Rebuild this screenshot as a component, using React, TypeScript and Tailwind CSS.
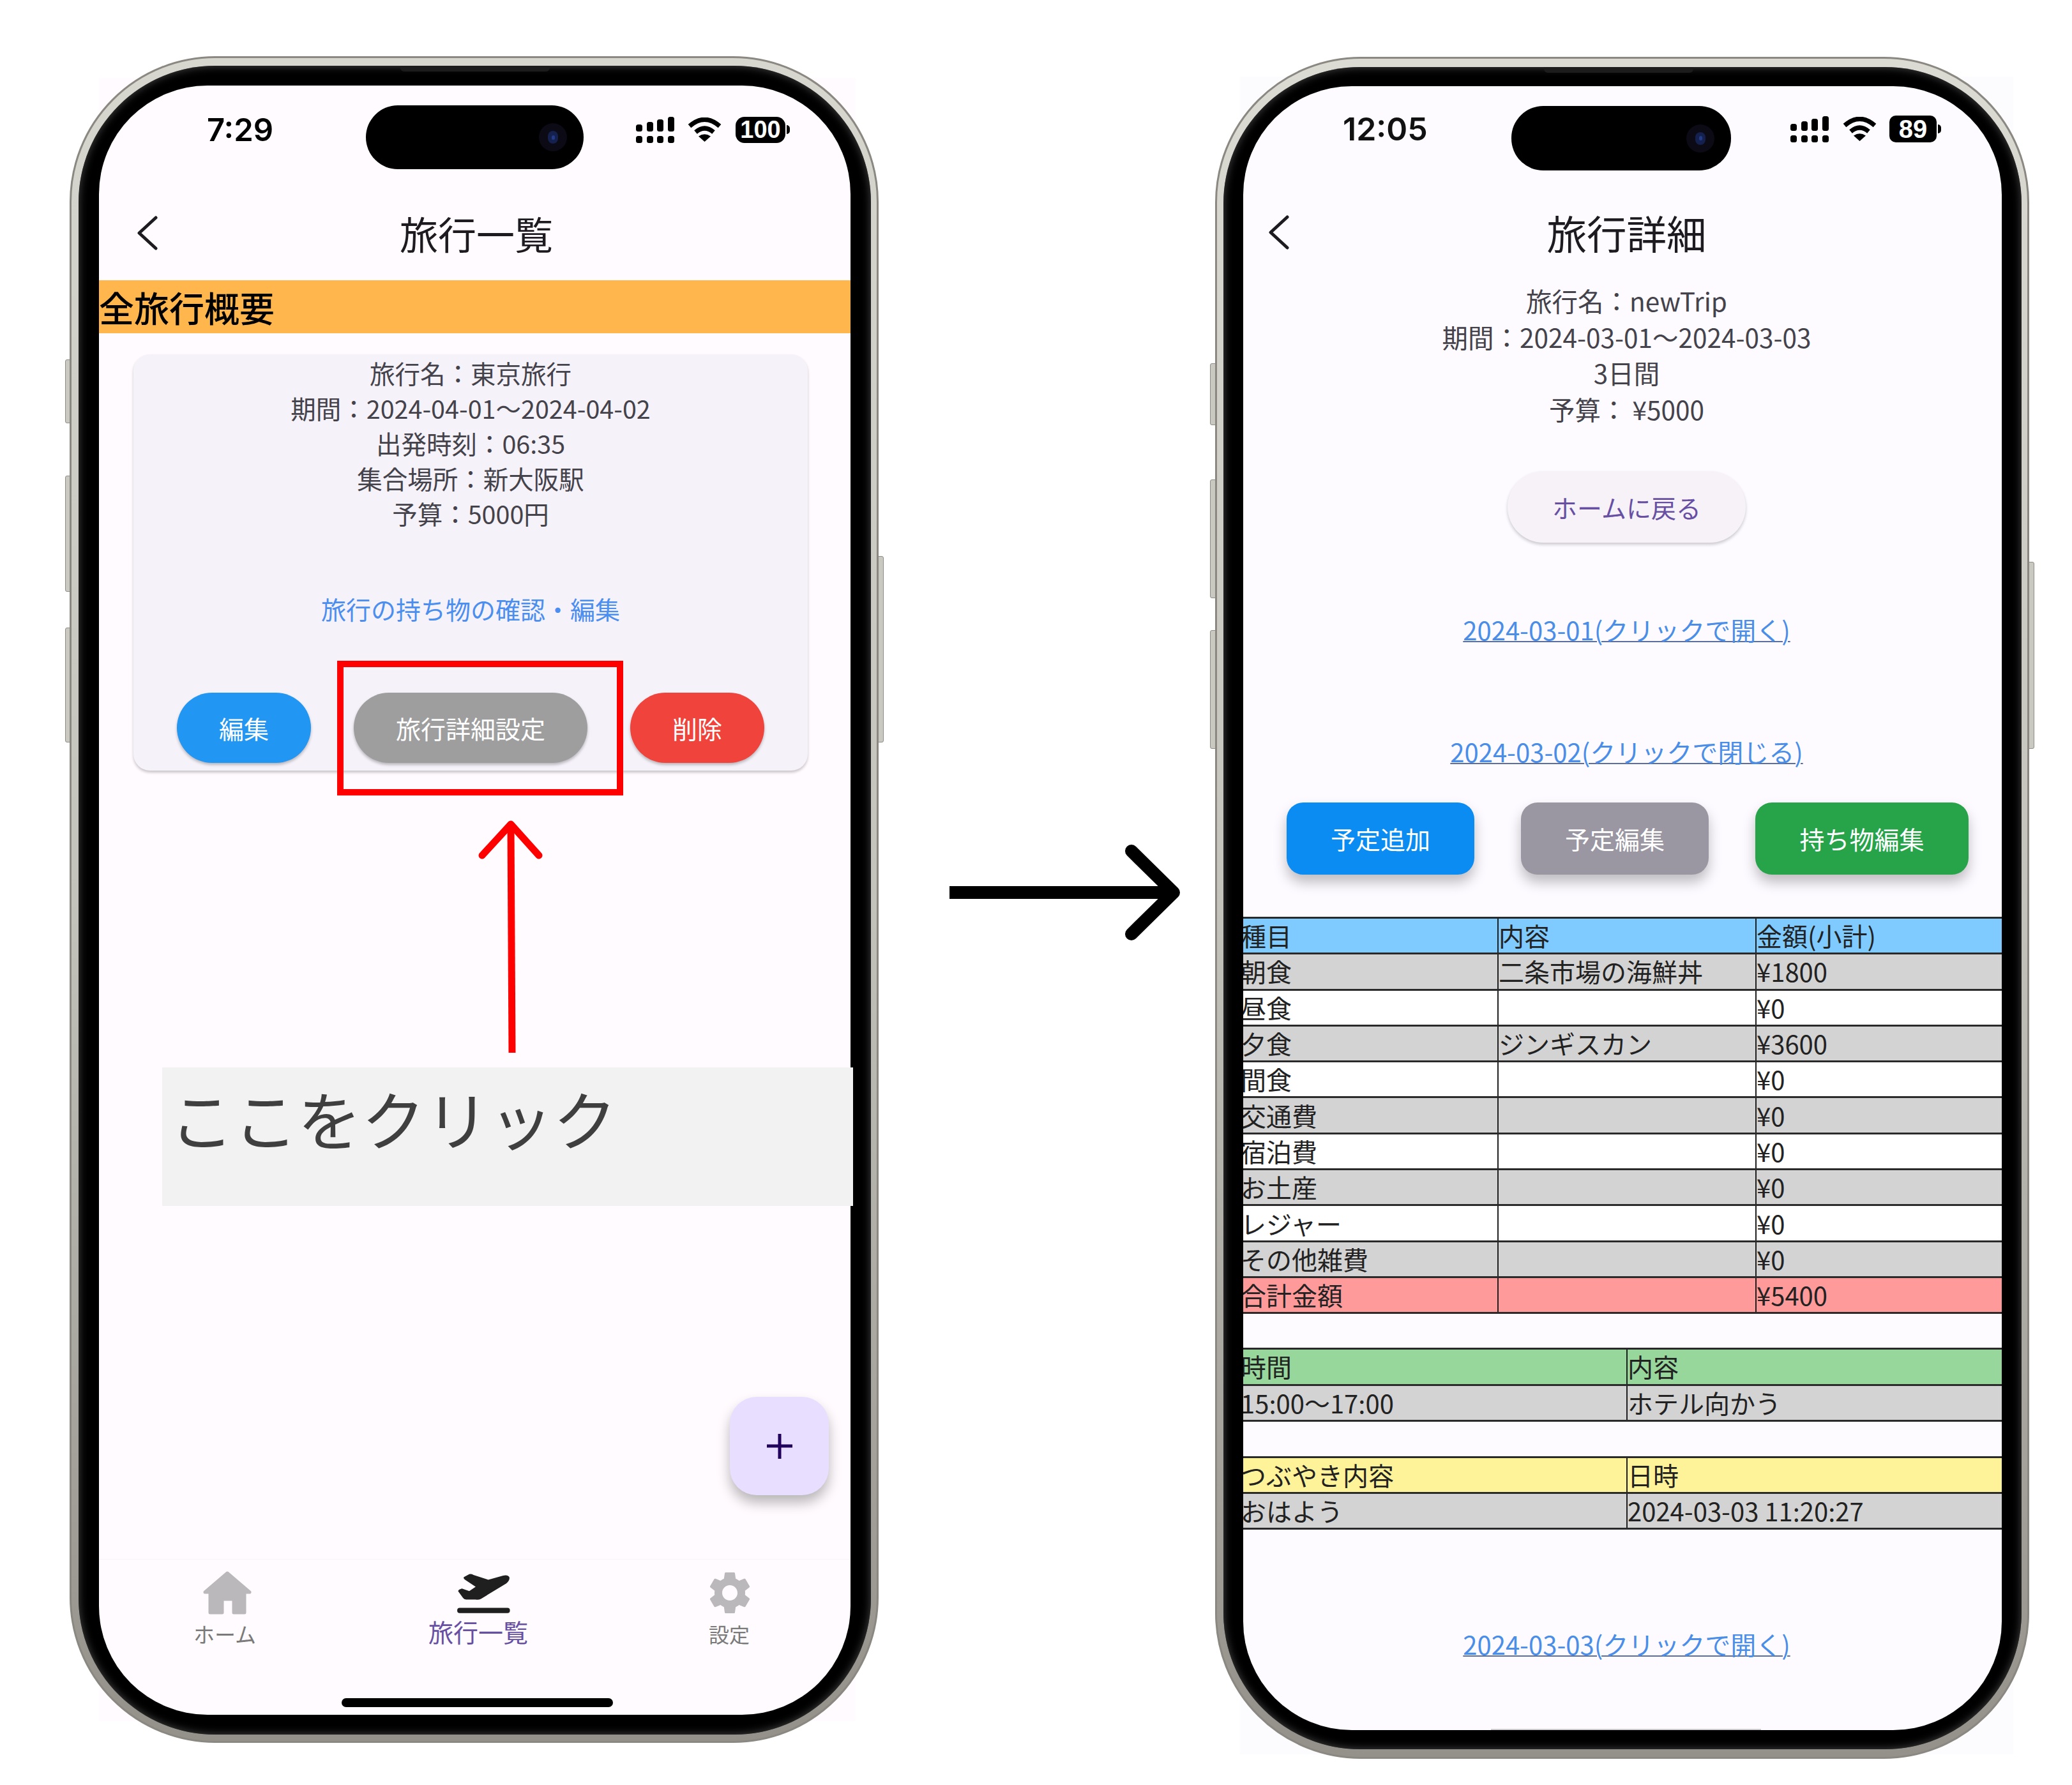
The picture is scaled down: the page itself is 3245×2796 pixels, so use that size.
import React from "react";
import { MdSettings } from "react-icons/md";

function Signal() {
  return (
    <svg width="61" height="41" viewBox="0 0 61 41" fill="#000">
      <rect x="0" y="12" width="10" height="11" rx="3.5" />
      <rect x="17" y="8" width="10" height="15" rx="3.5" />
      <rect x="33" y="4" width="10" height="19" rx="3.5" />
      <rect x="50" y="0" width="10" height="23" rx="3.5" />
      <rect x="0" y="30" width="10" height="11" rx="3.5" />
      <rect x="17" y="30" width="10" height="11" rx="3.5" />
      <rect x="33" y="30" width="10" height="11" rx="3.5" />
      <rect x="50" y="30" width="10" height="11" rx="3.5" />
    </svg>
  );
}

function Wifi() {
  return (
    <svg width="53" height="38" viewBox="0 0 53 38" fill="none" stroke="#000">
      <path d="M3 13.5 Q26.500 -7 50 13.500" strokeWidth="7" />
      <path d="M12.500 23 Q26.500 11 40.500 23" strokeWidth="7" />
      <path d="M17 29.500 Q26.500 23 36 29.500 L26.500 38 Z" fill="#000" stroke="none" />
    </svg>
  );
}

function Battery({ label, box }: { label: string; box: string }) {
  return (
    <div className="flex items-center gap-[2px]">
      <div className={`${box} bg-black flex items-center justify-center text-white font-bold leading-none font-['Liberation_Sans',sans-serif]`}>
        {label}
      </div>
      <div className="w-[5px] h-[14px] rounded-r-full bg-black" />
    </div>
  );
}

function Chevron() {
  return (
    <svg width="32" height="54" viewBox="0 0 32 54" fill="none" stroke="#1d1b20" strokeWidth="5" strokeLinecap="round" strokeLinejoin="round">
      <path d="M29 3 L3 27 L29 51" />
    </svg>
  );
}

function Island({ pos }: { pos: string }) {
  return (
    <div className={`absolute ${pos} rounded-[50px] bg-black flex items-center justify-end pr-[26px]`}>
      <div className="w-[44px] h-[44px] rounded-full bg-[#0c0a14] flex items-center justify-center">
        <div className="w-[16px] h-[20px] rounded-full bg-[#14204e] flex items-center justify-center">
          <div className="w-[5px] h-[7px] rounded-full bg-[#243a86]" />
        </div>
      </div>
    </div>
  );
}

function Side({ pos }: { pos: string }) {
  return <div className={`absolute ${pos} bg-[#c9c8c1] border border-[#8f8d86]`} />;
}

function Home() {
  return (
    <svg width="76" height="68" viewBox="0 0 76 68" fill="#bab8bb" stroke="#bab8bb" strokeWidth="5" strokeLinejoin="round">
      <path d="M38 3 L73 33 L65 33 L65 65 L48 65 L48 44 L30 44 L30 65 L11 65 L11 33 L3 33 Z" />
    </svg>
  );
}

function Plane() {
  return (
    <svg width="85" height="65" viewBox="100 70 256 196" fill="#1f1f1f">
      <path d="M135 92 L160 78 Q170 76 180 82 L250 105 L320 85 Q345 80 350 95 Q350 110 335 122 L215 195 Q205 200 190 198 L145 198 Q135 198 130 190 L108 160 Q105 152 125 146 L160 158 L190 138 L140 105 Q130 97 135 92 Z" />
      <rect x="103" y="237" width="249" height="25" rx="12" />
    </svg>
  );
}

function Cell({ children, first }: { children?: React.ReactNode; first?: boolean }) {
  return (
    <div className={`flex items-center whitespace-nowrap ${first ? "-ml-[4px]" : "border-l-2 border-[#1f1f1f]"}`}>
      <span className="leading-[50px] -mt-[1px]">{children}</span>
    </div>
  );
}

function Row({ cols, bg, cells }: { cols: string; bg: string; cells: string[] }) {
  return (
    <div className={`grid ${cols} ${bg} h-[56.300px] border-b-[3px] border-[#2a2a2a] text-[40px] text-[#222]`}>
      {cells.map((c, i) => (
        <Cell key={i} first={i === 0}>{c}</Cell>
      ))}
    </div>
  );
}

const costs: [string, string, string, string][] = [
  ["種目", "内容", "金額(小計)", "bg-[#7fcbff]"],
  ["朝食", "二条市場の海鮮丼", "¥1800", "bg-[#d3d3d3]"],
  ["昼食", "", "¥0", "bg-white"],
  ["夕食", "ジンギスカン", "¥3600", "bg-[#d3d3d3]"],
  ["間食", "", "¥0", "bg-white"],
  ["交通費", "", "¥0", "bg-[#d3d3d3]"],
  ["宿泊費", "", "¥0", "bg-white"],
  ["お土産", "", "¥0", "bg-[#d3d3d3]"],
  ["レジャー", "", "¥0", "bg-white"],
  ["その他雑費", "", "¥0", "bg-[#d3d3d3]"],
  ["合計金額", "", "¥5400", "bg-[#ff9a9a]"],
];

function LeftPhone() {
  return (
    <div className="relative ml-[109px] mt-[88px] w-[1267px] h-[2642px] shrink-0">
      <div className="absolute left-[46px] top-[34px] w-[1185px] h-[2574px] bg-[#fffbfe]" />
      <Side pos="-left-[7px] top-[475px] w-[8px] h-[100px] rounded-l-[3px]" />
      <Side pos="-left-[7px] top-[657px] w-[8px] h-[182px] rounded-l-[3px]" />
      <Side pos="-left-[7px] top-[895px] w-[8px] h-[180px] rounded-l-[3px]" />
      <Side pos="-right-[8px] top-[783px] w-[9px] h-[292px] rounded-r-[3px]" />
      <div className="relative w-full h-full rounded-[228px] bg-gradient-to-b from-[#d8d7cf] via-[#c4c3bb] to-[#93918a] border-[3px] border-[#8a8881] pt-[12px] pb-[10px] pl-[11px] pr-[9px]">
        <div className="relative w-full h-full rounded-[214px] bg-black pt-[31px] pb-[31px] pl-[32px] pr-[32px] shadow-[inset_0_0_14px_#4a4a4a]">
          <div className="absolute left-[504px] top-0 w-[234px] h-[9px] bg-[#1c1c1c] rounded-b-[6px]" />
          <div className="relative w-full h-full rounded-[170px] bg-[#fffbfe] overflow-hidden flex flex-col">
            <Island pos="left-[418px] top-[31px] w-[341px] h-[100px]" />
            <div className="h-[138px] shrink-0 flex items-center pl-[169px] pr-[95px]">
              <span className="font-['Inter',sans-serif] font-semibold text-[49px] leading-none text-black">7:29</span>
              <div className="ml-auto flex items-center">
                <Signal />
                <div className="ml-[20px]"><Wifi /></div>
                <div className="ml-[22px]"><Battery label="100" box="w-[78px] h-[41px] rounded-[14px] text-[38px]" /></div>
              </div>
            </div>
            <div className="h-[167px] shrink-0 grid grid-cols-[1fr_auto_1fr] items-center pt-[18px] pl-[60px] pr-[55px]">
              <div className="justify-self-start"><Chevron /></div>
              <div className="text-[60px] leading-[60px] text-[#1d1b20]">旅行一覧</div>
              <div />
            </div>
            <div className="h-[83px] shrink-0 bg-[#ffb74d] flex items-center pb-[2px] text-[55px] leading-[70px] font-medium text-black">全旅行概要</div>
            <div className="ml-[54px] mt-[33px] w-[1056px] h-[652px] shrink-0 rounded-[26px] bg-[#f6f2fa] shadow-[0_3px_4px_rgba(0,0,0,0.22)] flex flex-col items-center pt-[1px]">
              <div className="text-center text-[39.500px] leading-[55px] text-[#44424a]">
                <div>旅行名：東京旅行</div>
                <div>期間：2024-04-01〜2024-04-02</div>
                <div>出発時刻：06:35</div>
                <div>集合場所：新大阪駅</div>
                <div>予算：5000円</div>
              </div>
              <div className="mt-[95px] text-[39px] leading-[55px] text-[#4a8ef0]">旅行の持ち物の確認・編集</div>
              <div className="mt-[104px] flex gap-[67px] text-[39px] text-white">
                <div className="w-[210px] h-[110px] rounded-[55px] bg-[#2196f3] flex items-center justify-center shadow-[0_3px_4px_rgba(0,0,0,0.25)]">編集</div>
                <div className="w-[366px] h-[110px] rounded-[55px] bg-[#9e9e9e] flex items-center justify-center shadow-[0_3px_4px_rgba(0,0,0,0.25)]">旅行詳細設定</div>
                <div className="w-[210px] h-[110px] rounded-[55px] bg-[#f0433c] flex items-center justify-center shadow-[0_3px_4px_rgba(0,0,0,0.25)]">削除</div>
              </div>
            </div>
            <div className="flex-1" />
            <div className="absolute left-[988px] top-[2054px] w-[155px] h-[154px] rounded-[42px] bg-[#e8deff] flex items-center justify-center shadow-[0_12px_20px_rgba(0,0,0,0.28)]">
              <svg width="40" height="40" viewBox="0 0 40 40" fill="#21005d"><path d="M17.500 1h5v16.500H40v5H22.500V40h-5V22.500H0v-5h17.500z" /></svg>
            </div>
            <div className="h-[244px] shrink-0 border-t border-[#f7f3f6] flex pt-[18px]">
              <div className="w-[394px] flex flex-col items-center">
                <div className="h-[68px] flex items-center ml-[8px]"><Home /></div>
                <div className="mt-[10px] text-[33px] leading-[40px] text-[#7a7a7a]">ホーム</div>
              </div>
              <div className="w-[416px] flex flex-col items-center">
                <div className="h-[68px] flex items-center"><Plane /></div>
                <div className="mt-[4px] text-[39px] leading-[44px] text-[#6750a4] -ml-[16px]">旅行一覧</div>
              </div>
              <div className="w-[354px] flex flex-col items-center">
                <div className="h-[68px] flex items-center ml-[2px]"><MdSettings size={80} color="#bab8bb" /></div>
                <div className="mt-[10px] text-[32px] leading-[40px] text-[#7a7a7a]">設定</div>
              </div>
            </div>
            <div className="absolute left-[380px] bottom-[12px] w-[425px] h-[14px] rounded-full bg-black" />
          </div>
        </div>
      </div>
    </div>
  );
}

function RightPhone() {
  const c1 = "grid-cols-[398px_404px_1fr]";
  const c2 = "grid-cols-[600px_1fr]";
  return (
    <div className="relative ml-[48px] mt-[89px] w-[1275px] h-[2666px] shrink-0">
      <div className="absolute left-[39px] top-[31px] w-[1211px] h-[2628px] bg-[#fcfbfe]" />
      <Side pos="-left-[8px] top-[480px] w-[9px] h-[97px] rounded-l-[3px]" />
      <Side pos="-left-[8px] top-[662px] w-[9px] h-[186px] rounded-l-[3px]" />
      <Side pos="-left-[8px] top-[898px] w-[9px] h-[186px] rounded-l-[3px]" />
      <Side pos="-right-[8px] top-[791px] w-[9px] h-[293px] rounded-r-[3px]" />
      <div className="relative w-full h-full rounded-[228px] bg-gradient-to-b from-[#dcdbd3] via-[#c4c3bb] to-[#93918a] border-[3px] border-[#8a8881] pt-[13px] pb-[12px] pl-[10px] pr-[9px]">
        <div className="relative w-full h-full rounded-[214px] bg-black pt-[30px] pb-[30px] pl-[31px] pr-[31px] shadow-[inset_0_0_14px_#4a4a4a]">
          <div className="absolute left-[502px] top-0 w-[234px] h-[9px] bg-[#1c1c1c] rounded-b-[6px]" />
          <div className="relative w-full h-full rounded-[170px] bg-[#fdfbff] overflow-hidden flex flex-col">
            <Island pos="left-[420px] top-[31px] w-[344px] h-[101px]" />
            <div className="h-[138px] shrink-0 flex items-center pl-[156px] pr-[95px] pb-[4px]">
              <span className="font-['Inter',sans-serif] font-semibold text-[50px] leading-none text-[#111]">12:05</span>
              <div className="ml-auto flex items-center">
                <Signal />
                <div className="ml-[21px]"><Wifi /></div>
                <div className="ml-[20px]"><Battery label="89" box="w-[74px] h-[42px] rounded-[10px] text-[40px]" /></div>
              </div>
            </div>
            <div className="h-[170px] shrink-0 grid grid-cols-[1fr_auto_1fr] items-center pt-[20px] pl-[40px] pr-[27px]">
              <div className="justify-self-start -mt-[8px]"><Chevron /></div>
              <div className="text-[62.500px] leading-[62px] text-[#1d1b20] -mt-[8px]">旅行詳細</div>
              <div />
            </div>
            <div className="text-center pl-[13px] text-[40.500px] leading-[56.500px] text-[#44424a]">
              <div>旅行名：newTrip</div>
              <div>期間：2024-03-01〜2024-03-03</div>
              <div>3日間</div>
              <div>予算： ¥5000</div>
            </div>
            <div className="mt-[69px] ml-[13px] self-center w-[373px] h-[112px] rounded-[56px] bg-[#f7f2f8] flex items-center justify-center text-[39px] text-[#6750a4] shadow-[0_3px_5px_rgba(0,0,0,0.2)]">ホームに戻る</div>
            <div className="mt-[108px] pl-[13px] h-[56px] text-center text-[40px] leading-[56px] text-[#4a8ee8] underline decoration-[#5a6f9f] decoration-2">2024-03-01(クリックで開く)</div>
            <div className="mt-[135px] pl-[13px] h-[56px] text-center text-[40px] leading-[56px] text-[#4a8ee8] underline decoration-[#5a6f9f] decoration-2">2024-03-02(クリックで閉じる)</div>
            <div className="mt-[52px] ml-[68px] flex gap-[73px] text-[39px] text-white">
              <div className="w-[294px] h-[113px] rounded-[26px] bg-[#0a8cf2] flex items-center justify-center shadow-[0_12px_20px_rgba(0,0,0,0.25)]">予定追加</div>
              <div className="w-[294px] h-[113px] rounded-[26px] bg-[#9a97a2] flex items-center justify-center shadow-[0_12px_20px_rgba(0,0,0,0.25)]">予定編集</div>
              <div className="w-[334px] h-[113px] rounded-[26px] bg-[#27a34a] flex items-center justify-center shadow-[0_12px_20px_rgba(0,0,0,0.25)]">持ち物編集</div>
            </div>
            <div className="mt-[66px] border-t-[3px] border-[#2a2a2a]">
              {costs.map((r) => (
                <Row key={r[0]} cols={c1} bg={r[3]} cells={[r[0], r[1], r[2]]} />
              ))}
            </div>
            <div className="mt-[53px] border-t-[3px] border-[#2a2a2a]">
              <Row cols={c2} bg="bg-[#98d79c]" cells={["時間", "内容"]} />
              <Row cols={c2} bg="bg-[#d3d3d3]" cells={["15:00〜17:00", "ホテル向かう"]} />
            </div>
            <div className="mt-[54px] border-t-[3px] border-[#2a2a2a]">
              <Row cols={c2} bg="bg-[#fff39a]" cells={["つぶやき内容", "日時"]} />
              <Row cols={c2} bg="bg-[#d3d3d3]" cells={["おはよう", "2024-03-03 11:20:27"]} />
            </div>
            <div className="mt-[151px] pl-[13px] h-[56px] text-center text-[40px] leading-[56px] text-[#4a8ee8] underline decoration-[#5a6f9f] decoration-2">2024-03-03(クリックで開く)</div>
            <div className="absolute left-[388px] bottom-0 w-[423px] h-[2px] bg-[#cfcdd2]" />
          </div>
        </div>
      </div>
    </div>
  );
}

export default function App() {
  return (
    <div className="relative w-[3245px] h-[2796px] bg-white overflow-hidden flex items-start font-['Noto_Sans_CJK_JP','Noto_Sans',sans-serif]">
      <LeftPhone />
      <div className="ml-[111px] mt-[1323px] shrink-0 w-[368px] h-[150px]">
        <svg width="368" height="150" viewBox="0 0 368 150" fill="none" stroke="#000" strokeWidth="20" strokeLinecap="round" strokeLinejoin="round">
          <path d="M0 75 H352" strokeLinecap="butt" />
          <path d="M285 10 L351 75 L285 140" />
        </svg>
      </div>
      <RightPhone />
      <div className="absolute left-[528px] top-[1035px] w-[448px] h-[211px] border-[10px] border-[#ff0000]" />
      <svg className="absolute left-[745px] top-[1285px]" width="110" height="366" viewBox="0 0 110 366" fill="none" stroke="#ff0000" strokeWidth="11" strokeLinejoin="round" strokeLinecap="round">
        <path d="M55 6 L57 364" strokeLinecap="butt" />
        <path d="M10 55 L55 6 L99 55" />
      </svg>
      <div className="absolute left-[254px] top-[1672px] w-[1082px] h-[217px] bg-[#f2f2f3] pl-[12px] pt-[16px] text-[100px] leading-[125px] text-[#3f3f3f]">ここをクリック</div>
    </div>
  );
}
